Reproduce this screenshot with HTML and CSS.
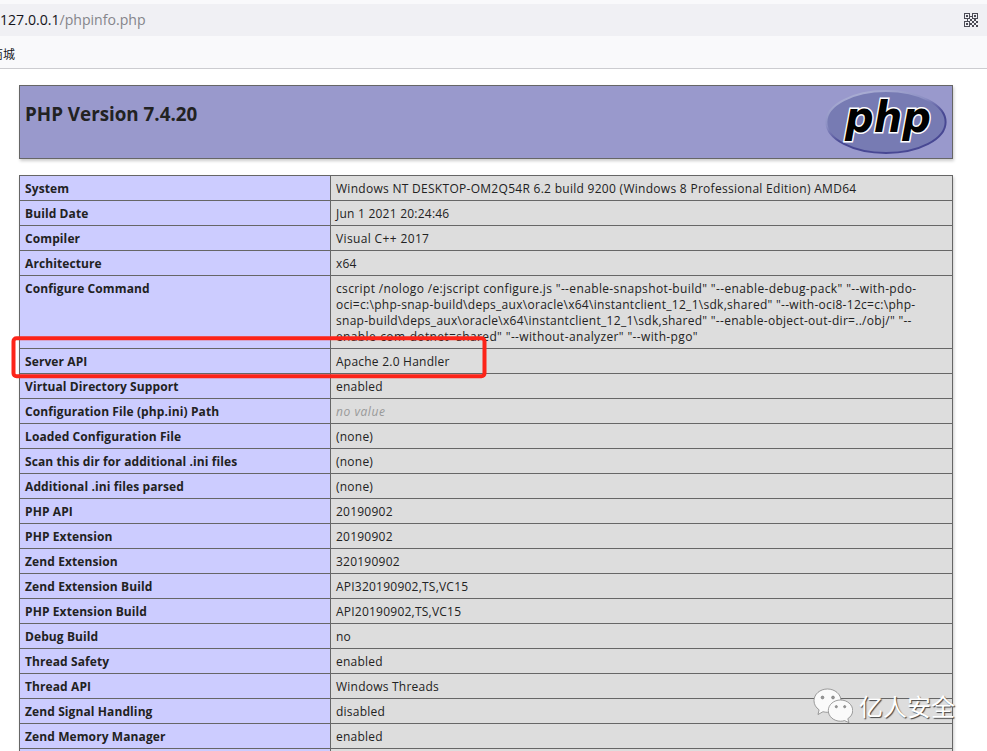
FILE: index.html
```html
<!DOCTYPE html>
<html lang="en">
<head>
<meta charset="utf-8">
<title>phpinfo()</title>
<link rel="stylesheet" href="styles.css">
</head>
<body>
<header class="browser">
  <div class="address"><div class="url"><span class="host">127.0.0.1</span>/phpinfo.php</div>
    <svg class="qr" width="14" height="14" viewBox="0 0 14 14" shape-rendering="crispEdges" fill="#4b4b55">
      <path fill-rule="evenodd" d="M0 0h6v6H0zM1 1v4h4V1zM8 0h6v6H8zM9 1v4h4V1zM0 8h6v6H0zM1 9v4h4V9z"/>
      <path d="M2 2h2v2H2zM10 2h2v2h-2zM2 10h2v2H2zM6 3h2v1H6zM3 6h1v2H3zM6 6h2v2H6zM8 8h2v2H8zM10 6h2v2h-2zM12 8h2v2h-2zM10 10h2v2h-2zM8 12h2v2H8zM12 12h2v2h-2zM6 10h2v2H6z"/>
    </svg>
  </div>
  <div class="bookmarks"><span>商城</span></div>
</header>
<main class="center">
  <section class="banner">
    <h1>PHP Version 7.4.20</h1>
    <svg class="logo" width="122" height="66" viewBox="0 0 122 66">
      <defs><linearGradient id="rim" x1="0.2" y1="0" x2="0.75" y2="1"><stop offset="0" stop-color="#aeb2d5"/><stop offset=".35" stop-color="#8d90c4"/><stop offset=".6" stop-color="#484893"/><stop offset="1" stop-color="#484893"/></linearGradient></defs>
      <ellipse cx="61" cy="33" rx="59.6" ry="31" fill="#777bb3" stroke="url(#rim)" stroke-width="2"/>
      <text class="mark" x="20" y="42.500" textLength="86" lengthAdjust="spacingAndGlyphs">php</text>
    </svg>
  </section>
  <table>
    <tr><th>System</th><td class="wide">Windows NT DESKTOP-OM2Q54R 6.2 build 9200 (Windows 8 Professional Edition) AMD64</td></tr>
    <tr><th>Build Date</th><td>Jun 1 2021 20:24:46</td></tr>
    <tr><th>Compiler</th><td class="wider">Visual C++ 2017</td></tr>
    <tr><th>Architecture</th><td>x64</td></tr>
    <tr><th>Configure Command</th><td class="wide"><span class="wider">cscript /nologo /e:jscript configure.js "--enable-snapshot-build" "--enable-debug-pack" "--with-pdo-</span><br>oci=c:\php-snap-build\deps_aux\oracle\x64\instantclient_12_1\sdk,shared" "--with-oci8-12c=c:\php-<br>snap-build\deps_aux\oracle\x64\instantclient_12_1\sdk,shared" "--enable-object-out-dir=../obj/" "--<br><span class="wider">enable-com-dotnet=shared" "--without-analyzer" "--with-pgo"</span></td></tr>
    <tr class="marked"><th>Server API<span class="highlight"></span></th><td>Apache 2.0 Handler</td></tr>
    <tr><th>Virtual Directory Support</th><td>enabled</td></tr>
    <tr><th>Configuration File (php.ini) Path</th><td><i>no value</i></td></tr>
    <tr><th>Loaded Configuration File</th><td>(none)</td></tr>
    <tr><th>Scan this dir for additional .ini files</th><td>(none)</td></tr>
    <tr><th>Additional .ini files parsed</th><td>(none)</td></tr>
    <tr><th>PHP API</th><td>20190902</td></tr>
    <tr><th>PHP Extension</th><td>20190902</td></tr>
    <tr><th>Zend Extension</th><td>320190902</td></tr>
    <tr><th>Zend Extension Build</th><td>API320190902,TS,VC15</td></tr>
    <tr><th>PHP Extension Build</th><td>API20190902,TS,VC15</td></tr>
    <tr><th>Debug Build</th><td>no</td></tr>
    <tr><th>Thread Safety</th><td>enabled</td></tr>
    <tr><th>Thread API</th><td>Windows Threads</td></tr>
    <tr><th>Zend Signal Handling</th><td>disabled</td></tr>
    <tr><th>Zend Memory Manager</th><td>enabled</td></tr>
    <tr><th></th><td></td></tr>
  </table>
</main>
<div class="watermark">
  <svg width="40" height="36" viewBox="0 0 40 36" fill="#fafafa" stroke="#777" stroke-width=".7">
    <path d="M14.500 1C7 1 1 6.200 1 12.700c0 3.700 2 7 5.100 9.100L5 26.500l5-2.800c1.500.4 3 .6 4.500.6C22 24.300 28 19 28 12.700S22 1 14.500 1z"/>
    <path d="M27.500 12C20.800 12 15.300 16.700 15.300 22.600s5.500 10.600 12.200 10.600c1.400 0 2.700-.2 4-.6l4.500 2-1.200-3.900c3-1.900 4.900-4.800 4.900-8.100C39.700 16.700 34.200 12 27.500 12z"/>
    <g fill="#999"><circle cx="9.500" cy="9.500" r="1.400"/><circle cx="20" cy="9.500" r="1.400"/><circle cx="23.300" cy="18.700" r="1.100"/><circle cx="31.700" cy="18.700" r="1.100"/></g>
  </svg>
  <span>亿人安全</span>
</div>
</body>
</html>
```

FILE: styles.css
```css
* { box-sizing: border-box; }
body { margin: 0; height: 751px; overflow: hidden; background: #fff; color: #222; font-family: "Open Sans", "Noto Sans CJK SC", sans-serif; }
.browser { height: 69px; padding-top: 4px; background: #f9f9fb; border-bottom: 1px solid #ccccd0; }
.address { height: 32px; background: #f0f0f4; display: flex; align-items: center; justify-content: space-between; padding-right: 9px; }
.url { font-size: 14.100px; line-height: 20px; color: #85858b; white-space: nowrap; }
.host { color: #15141a; }
.bookmarks { height: 32px; padding-top: 9px; overflow: hidden; font: 12px/18px "Noto Sans CJK SC", sans-serif; color: #15141a; }
.bookmarks span { display: inline-block; margin-left: -9px; }
.center { width: 934px; margin: 16px 0 0 19px; }
.banner { height: 74px; border: 1px solid #666; background: #9999cc; box-shadow: 1px 2px 3px #ccc; display: flex; justify-content: space-between; align-items: flex-start; padding: 3px 5px 0 5px; }
h1 { margin: 13px 0 0; font-size: 18.800px; line-height: 24px; font-weight: 700; }
.mark { font: italic bold 43px "DejaVu Sans", sans-serif; fill: #000; stroke: #fff; stroke-width: 3px; paint-order: stroke; }
table { width: 934px; margin-top: 16px; table-layout: fixed; border-collapse: collapse; box-shadow: 1px 2px 3px #ccc; font-size: 12px; line-height: 16px; }
th, td { border: 1px solid #666; padding: 5px 5px 3px; height: 25px; vertical-align: top; text-align: left; white-space: nowrap; }
th { width: 311px; background: #ccf; font-weight: 700; letter-spacing: .1px; }
td { background: #ddd; letter-spacing: .23px; }
td.wide { letter-spacing: .285px; }
.wider, td.wider { letter-spacing: .36px; }
i { color: #999; letter-spacing: .55px; }
.marked th { position: relative; }
.highlight { position: absolute; left: -8px; top: -12px; width: 475px; height: 42px; border: 4px solid #fc2419; border-radius: 5px; z-index: 1; transform: translate(-.5px, -.7px); }
.watermark { position: absolute; left: 813px; top: 688px; display: flex; gap: 6px; align-items: center; color: #fff; font: 24px/36px "Noto Sans CJK SC", sans-serif; text-shadow: 1px 1px 1px #444; }
```
